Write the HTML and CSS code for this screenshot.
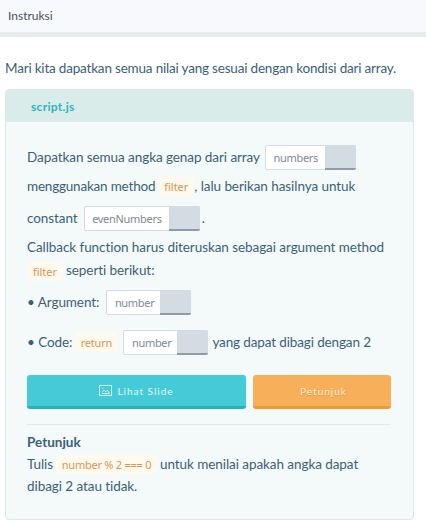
FILE: index.html
```html
<!DOCTYPE html>
<html lang="id">
<head>
<meta charset="utf-8">
<title>Instruksi</title>
<link rel="stylesheet" href="styles.css">
</head>
<body>
<header class="topbar">Instruksi</header>
<main class="content">
  <p class="intro">Mari kita dapatkan semua nilai yang sesuai dengan kondisi dari array.</p>
  <section class="card">
    <h2 class="card-title">script.js</h2>
    <div class="card-body">
      <div class="line line-first"><span>Dapatkan semua angka genap dari array</span><span class="token token-numbers"><span class="label">numbers</span><i class="slot"></i></span></div>
      <div class="line line-method"><span class="tight">menggunakan method</span><code class="code">filter</code><span>, lalu berikan hasilnya untuk</span></div>
      <div class="line line-constant"><span>constant</span><span class="token token-even"><span class="label">evenNumbers</span><i class="slot"></i></span><span class="dot">.</span></div>
      <div class="line line-callback"><span>Callback function harus diteruskan sebagai argument method</span></div>
      <div class="line line-follow"><code class="code">filter</code><span>seperti berikut:</span></div>
      <div class="line line-argument"><span>• Argument:</span><span class="token token-number"><span class="label">number</span><i class="slot"></i></span></div>
      <div class="line line-code"><span>• Code:</span><code class="code code-return">return</code><span class="token token-number"><span class="label">number</span><i class="slot"></i></span><span class="after">yang dapat dibagi dengan 2</span></div>
      <div class="actions">
        <button class="btn btn-slide"><svg class="icon" viewBox="0 0 13 11" width="13" height="11"><rect x=".5" y=".5" width="12" height="10"/><path d="M3 8.5h7.5L8.3 5.2 6.8 6.8 5 5.2 3 7.2M3.2 3.5h1"/></svg>Lihat Slide</button>
        <button class="btn btn-hint">Petunjuk</button>
      </div>
      <div class="hint">
        <h3 class="hint-title">Petunjuk</h3>
        <div class="line line-hint"><span>Tulis</span><code class="code code-expression">number % 2 === 0</code><span>untuk menilai apakah angka dapat</span></div>
        <div class="line line-hint">dibagi 2 atau tidak.</div>
      </div>
    </div>
  </section>
</main>
</body>
</html>
```
FILE: styles.css
```css
* { box-sizing: border-box; }
body {
  margin: 0;
  background: #fff;
  color: #3c5f78;
  font: 13.5px/22px Lato, sans-serif;
}
.topbar {
  height: 37px;
  padding: 0 8px;
  background: #f8f9fd;
  border-bottom: 5px solid #e8ebf0;
  color: #48505e;
  font-size: 12px;
  line-height: 32px;
}
.content { padding: 20px 12px 0 5px; }
.intro { margin: 0 0 10px; height: 22px; white-space: nowrap; letter-spacing: -.19px; }
.card {
  height: 431px;
  border: 1px solid #daecea;
  border-radius: 4px;
  background: #f4fafa;
}
.card-title {
  margin: 0;
  height: 32px;
  padding-left: 25px;
  background: #daecea;
  color: #2fb3bf;
  font-size: 12px;
  line-height: 34px;
  letter-spacing: .3px;
}
.card-body { padding: 20px 22px 0 21px; letter-spacing: -.07px; }
.line { display: flex; align-items: center; height: 22px; white-space: nowrap; }
.line-first { height: 30px; }
.line-method { height: 28px; }
.line-constant { height: 36px; }
.line-follow { height: 23px; }
.line-argument { height: 43px; }
.line-code { height: 36px; }
.line-constant > span:first-child,
.line-argument > span:first-child,
.line-code > span:first-child,
.after { padding-bottom: 1px; }
.tight { letter-spacing: -.2px; }
.code {
  width: 36px;
  margin: 1px 0 0 3px;
  height: 19px;
  border-radius: 4px;
  background: #fff9ee;
  color: #d69552;
  font: 11px/19px "Noto Sans", sans-serif;
  letter-spacing: 0;
  text-align: center;
}
.code-return { width: 42px; letter-spacing: -.2px; }
.line-follow .code { margin: 3px 3px 0 0; }
.line-hint .code { margin-right: 3px; margin-left: 3px; }
.code-expression { width: 101px; letter-spacing: -.25px; }
.token {
  display: flex;
  height: 25px;
  margin-left: 5px;
  border: 1px solid #d3dbe3;
  border-radius: 2px;
  background: #fff;
  color: #7f8797;
  font: 11px/24px "Noto Sans", sans-serif;
  letter-spacing: -.3px;
}
.label { flex: 1 1 0; min-width: 0; padding-left: 7.5px; }
.slot {
  flex: none;
  width: 31px;
  height: 25px;
  margin: -1px -1px 0 0;
  border-radius: 0 2px 2px 0;
  background: #d3dbe3;
  border-bottom: 2px solid #929bae;
}
.token-numbers { width: 91px; }
.token-even { width: 116px; margin-left: 6px; }
.token-number { width: 85px; }
.line-argument .token { margin-left: 7px; }
.line-code .token { margin-left: 6px; }
.dot { margin-left: 2px; }
.after { margin-left: 4px; letter-spacing: -.13px; }
.actions { display: flex; gap: 7px; margin-top: 15px; }
.btn {
  display: flex;
  align-items: center;
  justify-content: center;
  height: 34px;
  padding: 0;
  border: 0;
  border-radius: 3px;
  color: #e5f6f7;
  font: 10px/30px Lato, sans-serif;
  letter-spacing: 1px;
}
.btn-slide { width: 219px; background: #45cbd7; border-bottom: 3px solid #25b2bf; }
.btn-hint { width: 138px; padding-left: 3px; background: #f7b059; border-bottom: 3px solid #f39a2c; color: #fff0dd; text-shadow: 0 1px 1px rgba(160, 90, 10, .3); }
.icon { margin-right: 5px; fill: none; stroke: #d5f3f5; stroke-width: 1; }
.hint { margin-top: 15px; padding-top: 6px; border-top: 1px solid #daecea; }
.hint-title { margin: 0; font-size: 13.5px; line-height: 22px; letter-spacing: 0; }
```
